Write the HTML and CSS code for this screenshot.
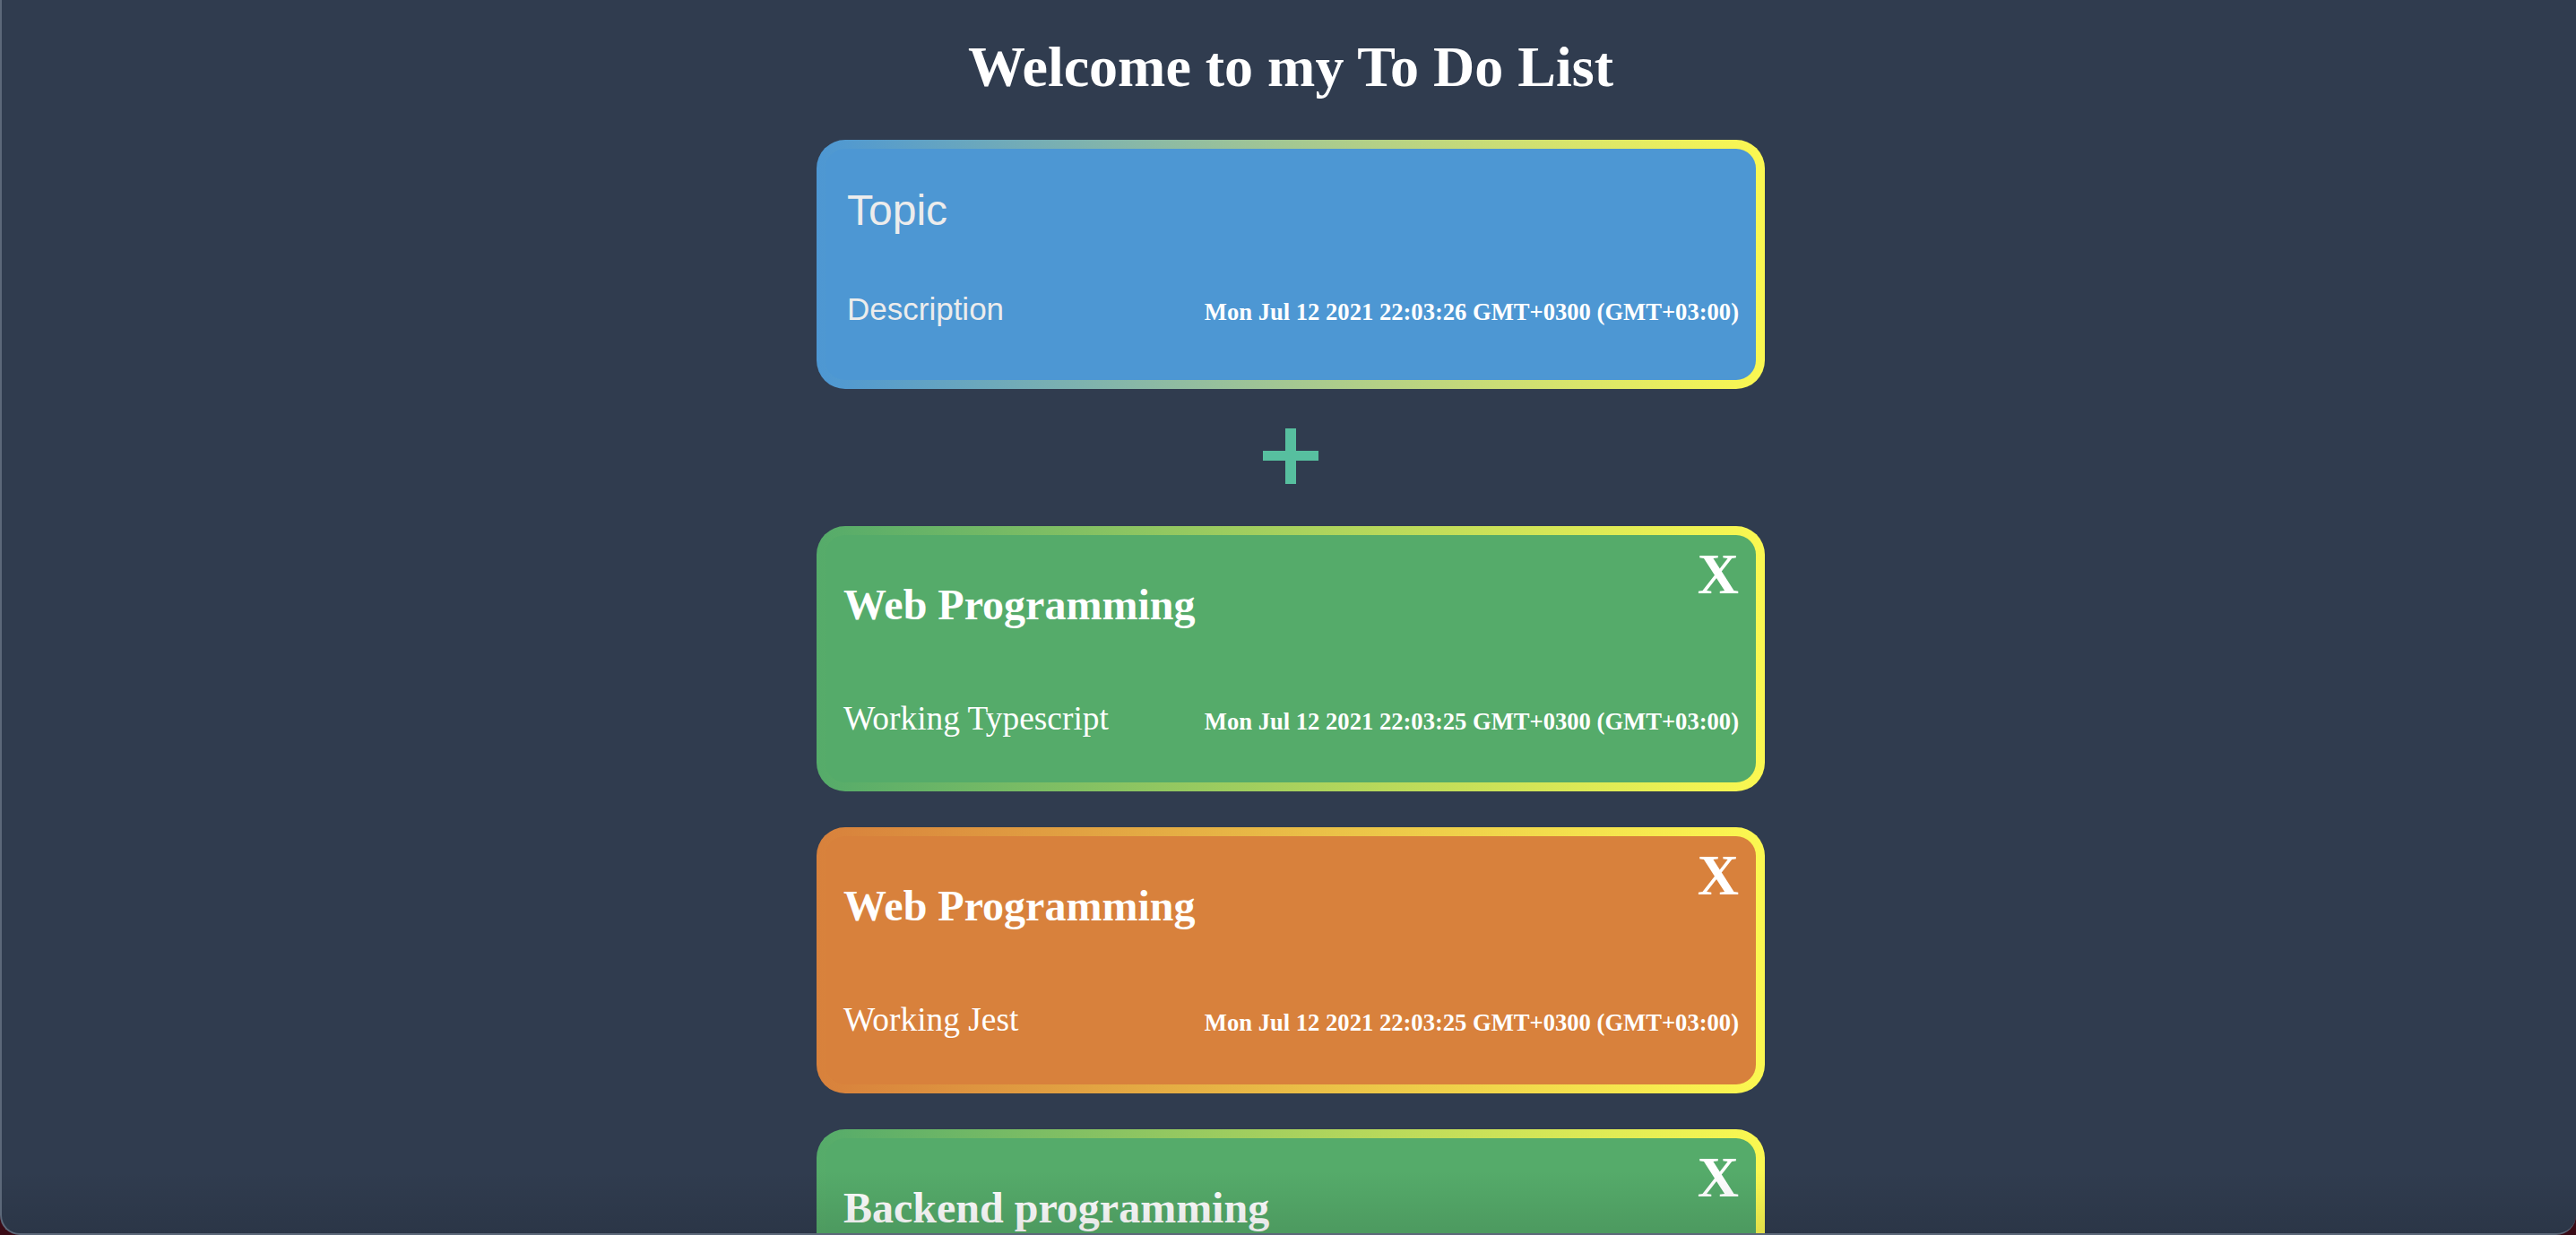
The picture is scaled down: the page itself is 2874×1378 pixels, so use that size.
FILE: index.html
```html
<!DOCTYPE html>
<html lang="en">
<head>
<meta charset="utf-8">
<title>To Do List</title>
<link rel="stylesheet" href="styles.css">
</head>
<body>
<div class="window">
  <h1 class="page-title">Welcome to my To Do List</h1>
  <main class="list">
    <section class="card card--blue">
      <div class="card-inner new-inner">
        <div class="new-topic">Topic</div>
        <div class="card-row">
          <div class="new-desc">Description</div>
          <h5 class="date">Mon Jul 12 2021 22:03:26 GMT+0300 (GMT+03:00)</h5>
        </div>
      </div>
    </section>

    <button class="add-btn" type="button" aria-label="Add">
      <svg width="62" height="62" viewBox="0 0 62 62"><rect x="0" y="25" width="62" height="11" fill="#57bf9f"/><rect x="25" y="0" width="12" height="62" fill="#57bf9f"/></svg>
    </button>

    <article class="card card--green">
      <div class="card-inner task-inner">
        <div class="task-head">
          <h2 class="task-title">Web Programming</h2>
          <span class="close">X</span>
        </div>
        <div class="card-row">
          <p class="task-desc">Working Typescript</p>
          <h5 class="date">Mon Jul 12 2021 22:03:25 GMT+0300 (GMT+03:00)</h5>
        </div>
      </div>
    </article>

    <article class="card card--orange">
      <div class="card-inner task-inner">
        <div class="task-head">
          <h2 class="task-title">Web Programming</h2>
          <span class="close">X</span>
        </div>
        <div class="card-row">
          <p class="task-desc">Working Jest</p>
          <h5 class="date">Mon Jul 12 2021 22:03:25 GMT+0300 (GMT+03:00)</h5>
        </div>
      </div>
    </article>

    <article class="card card--green">
      <div class="card-inner task-inner">
        <div class="task-head">
          <h2 class="task-title">Backend programming</h2>
          <span class="close">X</span>
        </div>
        <div class="card-row">
          <p class="task-desc">Working Node</p>
          <h5 class="date">Mon Jul 12 2021 22:03:25 GMT+0300 (GMT+03:00)</h5>
        </div>
      </div>
    </article>
  </main>
</div>
</body>
</html>
```
FILE: styles.css
```css
html, body {
  margin: 0;
  padding: 0;
  background: #3a0b16;
}

.window {
  position: relative;
  box-sizing: border-box;
  height: 1378px;
  overflow: hidden;
  background: #303c4f;
  border-left: 2px solid #5c6879;
  border-bottom: 2px solid #5c6879;
  border-radius: 0 0 22px 22px;
  padding-top: 43px;
  padding-left: 4px;
  font-family: "Liberation Serif", "Times New Roman", serif;
  color: #ffffff;
}

.window::after {
  content: "";
  position: absolute;
  left: 0;
  right: 0;
  bottom: 0;
  height: 70px;
  background: linear-gradient(to bottom, rgba(0, 0, 0, 0), rgba(0, 0, 0, 0.1));
  pointer-events: none;
}

.page-title {
  margin: 0;
  font-size: 64px;
  line-height: 1;
  font-weight: bold;
  text-align: center;
}

.list {
  width: 1058px;
  margin: 49px auto 0;
  display: flex;
  flex-direction: column;
}

.card {
  padding: 10px;
  border-radius: 32px;
  margin-bottom: 40px;
}

.card--blue {
  background: linear-gradient(to right, #4d97d3, #fbf851);
  margin-bottom: 0;
}

.card--green {
  background: linear-gradient(to right, #55ab6a, #fbf851);
}

.card--orange {
  background: linear-gradient(to right, #d8813c, #fbf851);
}

.card-inner {
  border-radius: 22px;
}

.card--blue .card-inner { background: #4d97d3; }
.card--green .card-inner { background: #55ab6a; }
.card--orange .card-inner { background: #d8813c; }

.card-row {
  display: flex;
  justify-content: space-between;
  align-items: baseline;
}

.new-inner {
  padding: 45px 19px 62px 24px;
  font-family: "Liberation Sans", Arial, Helvetica, sans-serif;
  color: #ececec;
}

.new-topic {
  font-size: 48px;
  line-height: 1;
  margin-bottom: 68px;
}

.new-desc {
  font-size: 35px;
  line-height: 1;
}

.date {
  margin: 0;
  font-size: 26.6px;
  line-height: 1;
  font-weight: bold;
  color: #ffffff;
  font-family: "Liberation Serif", "Times New Roman", serif;
}

.add-btn {
  align-self: center;
  display: flex;
  margin: 44px 0 47px;
  padding: 0;
  border: 0;
  background: transparent;
}

.task-inner {
  padding: 12px 19px 53px 20px;
}

.task-head {
  display: flex;
  justify-content: space-between;
  align-items: flex-start;
  margin-bottom: 84px;
}

.task-title {
  margin: 42px 0 0;
  font-size: 48px;
  line-height: 1;
  font-weight: bold;
}

.close {
  font-size: 64px;
  line-height: 1;
  font-weight: bold;
}

.task-desc {
  margin: 0;
  font-size: 37.4px;
  line-height: 1;
}
```
